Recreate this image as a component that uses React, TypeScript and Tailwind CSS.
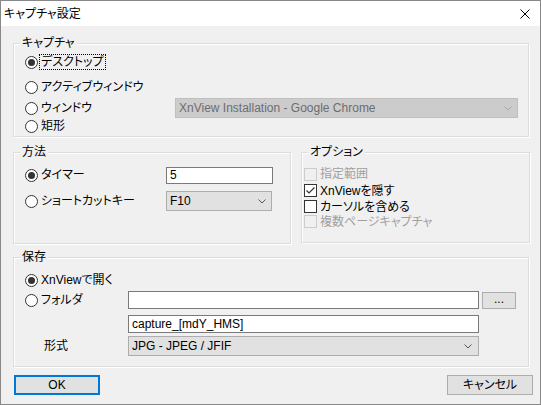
import React from "react";

const Radio = ({ checked }: { checked?: boolean }) => (
    <span className="w-[13px] h-[13px] rounded-full border border-[#333] bg-white flex items-center justify-center shrink-0">
        {checked && <span className="w-[7px] h-[7px] rounded-full bg-[#333]" />}
    </span>
);

const Check = ({ checked, disabled }: { checked?: boolean; disabled?: boolean }) => (
    <span className={disabled
        ? "w-[13px] h-[13px] border border-[#cccccc] bg-[#f0f0f0] shrink-0"
        : "w-[13px] h-[13px] border border-[#333] bg-white shrink-0 flex items-center justify-center"}>
        {checked && (
            <svg width="11" height="11" viewBox="0 0 11 11">
                <path d="M1.5 5.5 L4 8 L9.5 2.5" fill="none" stroke="#333" strokeWidth="1.2" />
            </svg>
        )}
    </span>
);

const Chevron = ({ color }: { color: string }) => (
    <svg width="8" height="5" viewBox="0 0 8 5">
        <path d="M0.5 0.5 L4 4 L7.5 0.5" fill="none" stroke={color} strokeWidth="1" />
    </svg>
);

const Group = ({ label, className, children }: { label: string; className: string; children: React.ReactNode }) => (
    <div className={`relative border border-[#dcdcdc] shadow-[inset_1px_1px_0_#fff,1px_1px_0_#fff] ${className}`}>
        <span className="absolute left-[6px] -top-[9px] px-[2px] leading-[16px] bg-[#f0f0f0]">{label}</span>
        {children}
    </div>
);

export default function App() {
    return (
        <div className="w-[541px] h-[405px] border border-[#888888] flex flex-col text-[12px] text-black font-['Liberation_Sans','Noto_Sans_CJK_JP',sans-serif] [font-feature-settings:'palt']">
            {/* title */}
            <div className="h-[25px] bg-white flex items-center justify-between pl-[3px] pr-[10px]">
                <span className="leading-[16px]">キャプチャ設定</span>
                <svg width="10" height="10" viewBox="0 0 10 10">
                    <path d="M0.5 0.5 L9.5 9.5 M9.5 0.5 L0.5 9.5" stroke="#000" strokeWidth="1" />
                </svg>
            </div>

            <div className="flex-1 bg-[#f0f0f0] pl-[12px] pt-[17px]">
                {/* capture */}
                <Group label="キャプチャ" className="w-[516px] h-[94px] pl-[11px] pt-[8px]">
                    <div className="h-[20px] flex items-center">
                        <Radio checked />
                        <span className="ml-[1px] border border-dotted border-black px-[1px] leading-[14px]">デスクトップ</span>
                    </div>
                    <div className="h-[20px] mt-[5px] flex items-center gap-[3px]">
                        <Radio />
                        <span>アクティブウィンドウ</span>
                    </div>
                    <div className="h-[20px] mt-[1px] flex items-center">
                        <div className="w-[150px] flex items-center gap-[3px]">
                            <Radio />
                            <span>ウィンドウ</span>
                        </div>
                        <div className="w-[343px] h-[20px] bg-[#cccccc] border border-[#bfbfbf] flex items-center justify-between pl-[3px] pr-[5px] text-[#6d6d6d]">
                            <span>XnView Installation - Google Chrome</span>
                            <Chevron color="#a8a8a8" />
                        </div>
                    </div>
                    <div className="h-[16px] flex items-center gap-[3px]">
                        <Radio />
                        <span>矩形</span>
                    </div>
                </Group>

                <div className="flex items-start gap-[10px] mt-[15px]">
                    {/* method */}
                    <Group label="方法" className="w-[278px] h-[92px] pl-[11px] pt-[12px]">
                        <div className="h-[20px] flex items-center">
                            <div className="w-[141px] flex items-center gap-[3px]">
                                <Radio checked />
                                <span>タイマー</span>
                            </div>
                            <div className="w-[107px] h-[17px] bg-white border border-[#7a7a7a] flex items-center pl-[3px]">5</div>
                        </div>
                        <div className="h-[20px] mt-[6px] flex items-center">
                            <div className="w-[141px] flex items-center gap-[3px]">
                                <Radio />
                                <span>ショートカットキー</span>
                            </div>
                            <div className="w-[106px] h-[20px] bg-[#e1e1e1] border border-[#adadad] flex items-center justify-between pl-[3px] pr-[5px]">
                                <span>F10</span>
                                <Chevron color="#555" />
                            </div>
                        </div>
                    </Group>

                    {/* options */}
                    <Group label="オプション" className="w-[229px] h-[91px] pl-[2px] pt-[13px]">
                        <div className="h-[16px] flex items-center gap-[3px] text-[#a0a0a0]">
                            <Check disabled />
                            <span>指定範囲</span>
                        </div>
                        <div className="h-[17px] flex items-center gap-[3px]">
                            <Check checked />
                            <span>XnViewを隠す</span>
                        </div>
                        <div className="h-[15px] flex items-center gap-[3px]">
                            <Check />
                            <span>カーソルを含める</span>
                        </div>
                        <div className="h-[15px] flex items-center gap-[3px] text-[#a0a0a0]">
                            <Check disabled />
                            <span>複数ページキャプチャ</span>
                        </div>
                    </Group>
                </div>

                {/* save */}
                <Group label="保存" className="w-[516px] h-[110px] mt-[13px] pl-[11px] pt-[12px]">
                    <div className="h-[20px] flex items-center gap-[3px]">
                        <Radio checked />
                        <span>XnViewで開く</span>
                    </div>
                    <div className="h-[18px] mt-[1px] flex items-center">
                        <div className="w-[103px] flex items-center gap-[3px]">
                            <Radio />
                            <span>フォルダ</span>
                        </div>
                        <div className="w-[351px] h-[18px] bg-white border border-[#7a7a7a]" />
                        <div className="ml-[3px] w-[34px] h-[17px] bg-[#e1e1e1] border border-[#adadad] flex items-center justify-center leading-none pb-[2px]">...</div>
                    </div>
                    <div className="h-[18px] mt-[6px] flex items-center">
                        <div className="w-[103px]" />
                        <div className="w-[351px] h-[18px] bg-white border border-[#7a7a7a] flex items-center pl-[3px]">capture_[mdY_HMS]</div>
                    </div>
                    <div className="h-[20px] mt-[3px] flex items-center">
                        <div className="w-[103px] pl-[19px]">形式</div>
                        <div className="w-[351px] h-[20px] bg-[#e1e1e1] border border-[#adadad] flex items-center justify-between pl-[3px] pr-[6px]">
                            <span>JPG - JPEG / JFIF</span>
                            <Chevron color="#555" />
                        </div>
                    </div>
                </Group>

                {/* buttons */}
                <div className="flex justify-between mt-[8px] pl-[1px] pr-[7px]">
                    <button className="w-[86px] h-[20px] bg-[#e1e1e1] border-2 border-[#0078d7] flex items-center justify-center">OK</button>
                    <button className="w-[86px] h-[20px] bg-[#e1e1e1] border border-[#adadad] flex items-center justify-center">キャンセル</button>
                </div>
            </div>
        </div>
    );
}
